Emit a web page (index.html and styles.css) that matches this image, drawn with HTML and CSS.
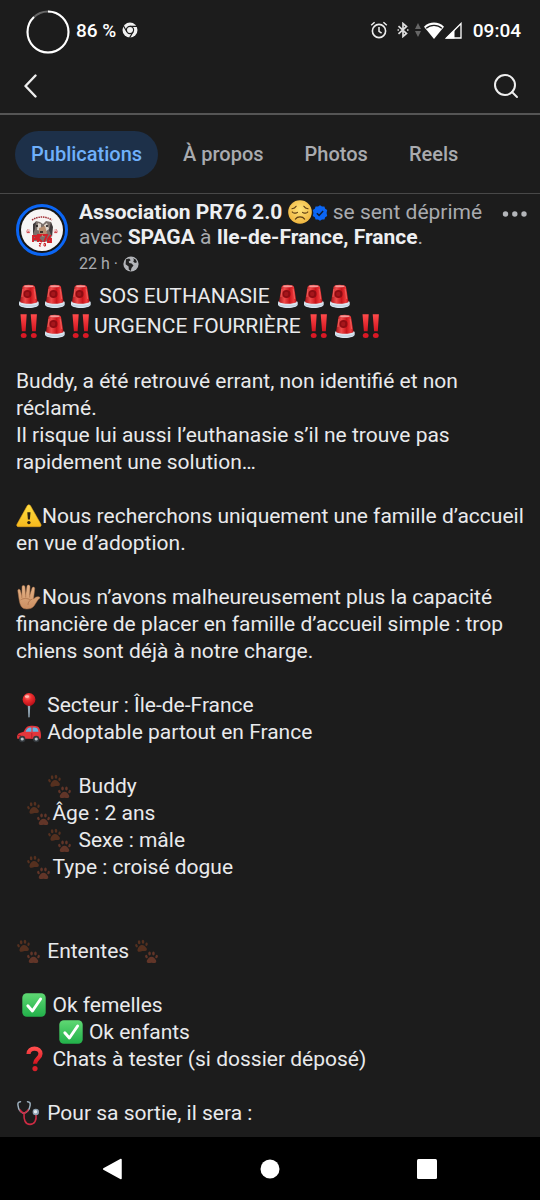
FILE: index.html
```html
<!DOCTYPE html>
<html lang="fr">
<head>
<meta charset="utf-8">
<meta name="viewport" content="width=device-width, initial-scale=1">
<title>Association PR76 2.0</title>
<link rel="stylesheet" href="styles.css">
</head>
<body>
<svg class="sprite" aria-hidden="true">
  <defs>
    <linearGradient id="g-red" x1="0" x2="1" y1="0" y2="0"><stop offset="0" stop-color="#a8151a"/><stop offset=".3" stop-color="#ee4a4a"/><stop offset=".6" stop-color="#c9151b"/><stop offset=".85" stop-color="#ef3a3c"/><stop offset="1" stop-color="#a30f15"/></linearGradient>
    <linearGradient id="g-mark" x1="0" x2="0" y1="0" y2="1"><stop offset="0" stop-color="#ff4b4b"/><stop offset="1" stop-color="#d3141f"/></linearGradient>
    <linearGradient id="g-warn" x1="0" x2="0" y1="0" y2="1"><stop offset="0" stop-color="#ffdf43"/><stop offset="1" stop-color="#f6b81c"/></linearGradient>
    <linearGradient id="g-hand" x1="0" x2="0" y1="0" y2="1"><stop offset="0" stop-color="#e6b489"/><stop offset="1" stop-color="#cb8f62"/></linearGradient>
    <linearGradient id="g-green" x1="0" x2="0" y1="0" y2="1"><stop offset="0" stop-color="#5fd873"/><stop offset="1" stop-color="#22b04a"/></linearGradient>
    <radialGradient id="g-pin" cx=".4" cy=".3" r=".7"><stop offset="0" stop-color="#ff8a80"/><stop offset=".4" stop-color="#ee2f2f"/><stop offset="1" stop-color="#b90f19"/></radialGradient>
    <radialGradient id="g-face" cx=".5" cy=".4" r=".6"><stop offset="0" stop-color="#ffe27a"/><stop offset="1" stop-color="#efb53f"/></radialGradient>
  </defs>
  <symbol id="siren" viewBox="0 0 26 26">
    <path d="M3 19.500c0-1 1.500-1.800 3-1.800h13.500c1.800 0 3.200.8 3.200 1.800v2c0 1.800-4 3.500-9.800 3.500S3 23.300 3 21.500z" fill="#d9e6f1"/>
    <path d="M4 21.500c2 2 15.500 2 18 0" fill="none" stroke="#a9bccd" stroke-width=".6"/>
    <path d="M6.500 4c.3-1.600 2.800-2.300 6.200-2.300S18.700 2.400 19 4l2.600 15c-3 2.400-14.700 2.400-17.600 0z" fill="url(#g-red)"/>
    <circle cx="11.500" cy="11" r="4" fill="#8d0c12"/><circle cx="11.200" cy="11" r="2.200" fill="#a5161b"/>
    <ellipse cx="12.800" cy="3.200" rx="4.800" ry="1" fill="#f59a98"/>
    <path d="M18.200 6l1.500 10M7 6l-1 8" stroke="#ef5c58" stroke-width="1"/>
  </symbol>
  <symbol id="double" viewBox="0 0 26 26">
    <path d="M4.500 1.200h6.200l-1.100 17H5.900zM14.700 1.200h6.200l-1.100 17h-3.700z" fill="url(#g-mark)"/>
    <ellipse cx="7.700" cy="22.500" rx="2.900" ry="2.500" fill="#db1925"/><ellipse cx="17.800" cy="22.500" rx="2.900" ry="2.500" fill="#db1925"/>
  </symbol>
  <symbol id="warning" viewBox="0 0 26 26">
    <path d="M11.200 2.800c.8-1.400 2.500-1.400 3.300 0l10.400 18.400c.7 1.300-.1 2.500-1.500 2.500H2.500C1 23.700.3 22.500 1 21.200z" fill="url(#g-warn)" stroke="#e7a51b" stroke-width=".6"/>
    <path d="M11.300 9.200h3.200l-.6 7.300h-2z" fill="#2b2112"/><ellipse cx="12.900" cy="19.600" rx="1.700" ry="1.600" fill="#2b2112"/>
  </symbol>
  <symbol id="hand" viewBox="0 0 26 26">
    <path d="M3 15L1.800 6.800c-.2-1.900 2-2.200 2.500-.5l1.500 5.500L6 3c0-1.900 2.800-2 3 0l.7 8L11 2.200c.3-1.800 3-1.600 3 .3l-.3 9L16 4.200c.6-1.800 3-1.200 2.700.7L17.500 15l1.700-1.500c1.600-1.300 4.300-1 4.800.1.300.8-1 1.300-2 2.200l-4 6.200C16.500 24 14 25 10.800 25 6 25 4 22 3 15z" fill="url(#g-hand)" stroke="#a96e47" stroke-width=".5"/>
    <path d="M5.800 11.800v2M9.700 11v2.500M13.700 11.500v2M4.500 16c3-2 7-2 10 0M16.500 15c-3 1-4.500 3-4.500 6" fill="none" stroke="#a96e47" stroke-width=".7"/>
  </symbol>
  <symbol id="pin" viewBox="0 0 26 26">
    <path d="M11.700 12h2.600l-.6 12.500L13 26l-.7-1.500z" fill="#93a7b5"/>
    <circle cx="13" cy="7.500" r="6.400" fill="url(#g-pin)"/><ellipse cx="11" cy="4.600" rx="2.200" ry="1.400" fill="#ffb7b0"/>
  </symbol>
  <symbol id="car" viewBox="0 0 26 26">
    <path d="M1.300 19.800c-.8-3 .2-5.200 3.200-6l3.200-1c1.500-3.300 3-5.600 5.600-5.800 3.200-.3 6.200-.2 8.200.4 1.700.6 2.700 3.400 3.200 6 .5 2.700.4 4.900-.2 6.400z" fill="#e2363c"/>
    <path d="M9.500 12.800c.9-2.100 2-4 3.900-4.200h2v4.200zM16.600 8.500c1.500 0 3 .1 4 .4 1 .4 1.700 2.200 2 3.900h-6z" fill="#62b6e4"/>
    <path d="M2 16.500h3M15.800 14v5" stroke="#a31c25" stroke-width=".8"/>
    <circle cx="6.200" cy="20" r="3.200" fill="#33383d"/><circle cx="20.200" cy="20" r="3.200" fill="#33383d"/><circle cx="6.200" cy="20" r="1.600" fill="#b7c2c9"/><circle cx="20.200" cy="20" r="1.600" fill="#b7c2c9"/>
  </symbol>
  <symbol id="paw" viewBox="0 0 12 12">
    <path d="M6 5.700c1.900 0 3 1.600 4 3 .9 1.400.2 3-1.400 2.900-1 0-1.600-.4-2.600-.4s-1.600.4-2.600.4C1.800 11.700 1.100 10.100 2 8.700c1-1.400 2.100-3 4-3z"/>
    <ellipse cx="1.300" cy="5.600" rx="1.100" ry="1.600" transform="rotate(-20 1.300 5.600)"/><ellipse cx="4.200" cy="2.800" rx="1.200" ry="1.900"/><ellipse cx="7.800" cy="2.800" rx="1.200" ry="1.900"/><ellipse cx="10.700" cy="5.600" rx="1.100" ry="1.600" transform="rotate(20 10.700 5.600)"/>
  </symbol>
  <symbol id="paws" viewBox="0 0 26 26">
    <g fill="#55301f"><use href="#paw" x="1" y="1" width="13" height="13" transform="rotate(-8 7 7)"/></g>
    <g fill="#613528"><use href="#paw" x="11" y="12.500" width="13" height="13"/></g>
  </symbol>
  <symbol id="check" viewBox="0 0 26 26">
    <rect x="1.300" y="1.300" width="23.400" height="23.400" rx="4.500" fill="url(#g-green)"/>
    <path d="M6.800 13.800l4.600 5.200 8.200-12" fill="none" stroke="#fff" stroke-width="2.900" stroke-linecap="round" stroke-linejoin="round"/>
  </symbol>
  <symbol id="question" viewBox="0 0 26 26">
    <path d="M7.500 8c0-3.500 2.500-5.300 6-5.300s6 1.900 6 5c0 4.800-5.500 4.800-5.500 10" fill="none" stroke="url(#g-mark)" stroke-width="4.200"/>
    <circle cx="14" cy="22.600" r="2.600" fill="#d8202a"/>
  </symbol>
  <symbol id="stethoscope" viewBox="0 0 26 26">
    <path d="M4.500 1.700C2 2 1.600 3 2 5.500c.5 4 2.500 7 5.500 7.700 3.600-.6 6-3.600 6.600-7.700.4-2.500-.2-3.500-2.600-3.800" fill="none" stroke="#9db0bf" stroke-width="1.500" stroke-linecap="round"/>
    <path d="M4 9.500c.8 2.200 2.200 3.400 4 3.700 1.800-.3 3.300-1.600 4.300-3.700M8 13.200c-.3 6.200 1 11.200 6 11.200 4.500 0 6.800-4 6-10" fill="none" stroke="#cc2b43" stroke-width="1.600"/>
    <circle cx="19.800" cy="12" r="3.200" fill="#8fa3b3"/><circle cx="19.500" cy="11.800" r="1.700" fill="#e3ebf0"/>
  </symbol>
  <symbol id="sad" viewBox="0 0 26 26">
    <circle cx="13" cy="13" r="12.800" fill="url(#g-face)"/>
    <path d="M4.300 9.500c2-.2 3.500-1 4.500-2.700M21.700 9.500c-2-.2-3.500-1-4.500-2.700M4.600 13c1.200 1.600 4.200 1.700 5.600.4M21.400 13c-1.200 1.600-4.200 1.700-5.600.4M8 20.600c2.300-3 7.700-3 10 0" fill="none" stroke="#5c3b12" stroke-width="1.300" stroke-linecap="round"/>
  </symbol>
</svg>

<header>
  <div class="status">
    <svg class="ring" viewBox="0 0 44 44" aria-hidden="true"><circle cx="22" cy="22" r="20.500" fill="none" stroke="#666" stroke-width="2"/><circle cx="22" cy="22" r="20.500" pathLength="100" stroke-dasharray="88 12" transform="rotate(-90 22 22)" fill="none" stroke="#fff" stroke-width="2"/></svg>
    <span class="battery">86 %</span>
    <svg class="chrome" viewBox="0 0 16 16" aria-hidden="true"><circle cx="8" cy="8" r="7.500" fill="#f1f1f1"/><circle cx="8" cy="8" r="3.600" fill="none" stroke="#1c1c1c" stroke-width="1.200"/><path d="M8 4.400h7M4.900 9.800L1.400 3.800M11.100 9.800L7.600 15.800" stroke="#1c1c1c" stroke-width="1.200"/></svg>
    <span class="grow"></span>
    <svg class="alarm" viewBox="0 0 18 18" fill="none" stroke="#eee" aria-hidden="true"><circle cx="9" cy="10" r="6.600" stroke-width="1.600"/><path d="M9 6v4.300l2.600 1.800M1.200 4.200L4.600 1.300M16.800 4.200l-3.400-2.900" stroke-width="1.500"/></svg>
    <svg class="bluetooth" viewBox="0 0 12 16" fill="none" stroke="#ddd" stroke-width="1.700" aria-hidden="true"><path d="M1.500 4.200l8 7.300L6 14.500v-13l3.500 3-8 7.300"/><path d="M.5 8h1.500M10 8h1.500"/></svg>
    <svg class="updown" viewBox="0 0 6 14" fill="#666" aria-hidden="true"><path d="M3 0l3 6H0zM3 14l3-6H0z"/></svg>
    <svg class="wifi" viewBox="0 0 20 17" aria-hidden="true"><path d="M0 4.800C5.500-.8 14.500-.8 20 4.800L10 17z" fill="#fff"/><path d="M2.200 6.300C6.500 2.300 13.500 2.300 17.800 6.300" fill="none" stroke="#1c1c1c" stroke-width="1.300"/></svg>
    <svg class="signal" viewBox="0 0 17 17" aria-hidden="true"><path d="M16 1.500V16H1.500z" fill="none" stroke="#fff" stroke-width="1.300"/><path d="M9.500 8v8.500H.5z" fill="#fff"/></svg>
    <time class="clock">09:04</time>
  </div>
  <div class="toolbar">
    <button aria-label="Retour"><svg width="14" height="26" viewBox="0 0 14 26"><path d="M12.500 2.500L2.500 13l10 10.500" fill="none" stroke="#eee" stroke-width="2.400" stroke-linecap="round" stroke-linejoin="round"/></svg></button>
    <button aria-label="Rechercher"><svg width="26" height="26" viewBox="0 0 26 26" fill="none" stroke="#eee" stroke-width="2"><circle cx="12" cy="12" r="10"/><path d="M19 19l5 5" stroke-linecap="round"/></svg></button>
  </div>
  <nav class="tabs">
    <a class="tab active" href="#publications" aria-current="page">Publications</a>
    <a class="tab" href="#apropos">À propos</a>
    <a class="tab" href="#photos">Photos</a>
    <a class="tab" href="#reels">Reels</a>
  </nav>
</header>

<main id="publications">
  <article>
    <div class="author">
      <svg class="avatar" viewBox="0 0 52 52" role="img" aria-label="Association PR76 2.0">
        <circle cx="26" cy="26" r="24.500" fill="#151515" stroke="#0b66f5" stroke-width="3"/><circle cx="26" cy="26" r="21" fill="#f7f5f4"/>
        <path d="M16 16q10-6 20 0" fill="none" stroke="#a02c32" stroke-width="1.500" stroke-dasharray="1.500 .8"/>
        <path d="M17 21l3-4 4 1 3 2 3-3 5 1 1 6-1 13-8 1-10-1z" fill="#7b706b"/>
        <path d="M17 20l3-2-1 7-2 5zM35 18l2 5-1 10-3-7z" fill="#3f3a3b"/>
        <path d="M22 19l3 1v7l-4-1zM28 21l3-2 2 6-4 3z" fill="#dfd5cc"/><path d="M23 24l6-2 2 7-4 4-4-4z" fill="#b78e70"/>
        <path d="M20 22h2M30 22h2M24 28h3" stroke="#171414" stroke-width="1.500"/>
        <path d="M17 31v7M17 32h3v3h-3M22 38v-7h3l-3 3 4 4M27 31h4l-3 7M35 31l-3 4v3h3v-3h-3" fill="none" stroke="#d42029" stroke-width="1.900"/>
        <path d="M23 39.500h2l-2 2.500h2M28 39.500h1.500v2.500H28z" fill="none" stroke="#c9262d"/>
        <g fill="#d34a50"><use href="#paw" x="10" y="25" width="4.500" height="4.500"/><use href="#paw" x="37.500" y="25" width="4.500" height="4.500"/></g>
      </svg>
      <div class="author-text">
        <h1><strong>Association PR76 2.0</strong> <svg class="emoji feeling" role="img" aria-label="triste"><use href="#sad"/></svg><svg class="verified" viewBox="0 0 16 16" role="img" aria-label="Compte vérifié"><path d="M8 .3l2 1.300 2.400-.1.800 2.200 2 1.400L14.600 8l.6 2.900-2 1.400-.8 2.200-2.400-.1-2 1.300-2-1.300-2.400.1-.8-2.200-2-1.400L1.400 8 .8 5.100l2-1.400.8-2.200 2.400.1z" fill="#0b66f5"/><path d="M4.800 8.200l2.300 2.200 4-4.300" fill="none" stroke="#101c30" stroke-width="1.500"/></svg> se sent déprimé avec <strong>SPAGA</strong> à <strong>Ile-de-France, France</strong>.</h1>
        <p class="meta">22 h · <svg width="16" height="16" viewBox="0 0 16 16" role="img" aria-label="Public"><circle cx="8" cy="8" r="7.600" fill="#b3b5b9"/><path d="M3 3.200l3.200-.7 1.500 1.700-2 1.200.5 1.600 2.400.6 1.900 2-2 2.400-.7 3-2-1.500-.2-2.900-3-2.400zM10 2.200l2.700 1.300 1.300 2.800-2 .7-1.800-1.600.8-1.500z" fill="#222"/></svg></p>
      </div>
      <button class="more" aria-label="Plus d’options"><svg width="26" height="6" viewBox="0 0 26 6" fill="#b3b5b9"><circle cx="3.500" cy="3" r="2.700"/><circle cx="12.800" cy="3" r="2.700"/><circle cx="22" cy="3" r="2.700"/></svg></button>
    </div>
    <div class="body">
      <p class="lead"><svg class="emoji"><use href="#siren"/></svg><svg class="emoji"><use href="#siren"/></svg><svg class="emoji"><use href="#siren"/></svg> SOS EUTHANASIE <svg class="emoji"><use href="#siren"/></svg><svg class="emoji"><use href="#siren"/></svg><svg class="emoji"><use href="#siren"/></svg><br><svg class="emoji"><use href="#double"/></svg><svg class="emoji"><use href="#siren"/></svg><svg class="emoji"><use href="#double"/></svg>URGENCE FOURRIÈRE <svg class="emoji"><use href="#double"/></svg><svg class="emoji"><use href="#siren"/></svg><svg class="emoji"><use href="#double"/></svg></p>
      <p>Buddy, a été retrouvé errant, non identifié et non réclamé.<br>Il risque lui aussi l’euthanasie s’il ne trouve pas rapidement une solution…</p>
      <p><svg class="emoji"><use href="#warning"/></svg>Nous recherchons uniquement une famille d’accueil en vue d’adoption.</p>
      <p><svg class="emoji"><use href="#hand"/></svg>Nous n’avons malheureusement plus la capacité financière de placer en famille d’accueil simple : trop chiens sont déjà à notre charge.</p>
      <p><svg class="emoji"><use href="#pin"/></svg> Secteur : Île-de-France<br><svg class="emoji"><use href="#car"/></svg> Adoptable partout en France</p>
      <p class="facts">      <svg class="emoji"><use href="#paws"/></svg> Buddy<br>  <svg class="emoji"><use href="#paws"/></svg>Âge : 2 ans<br>      <svg class="emoji"><use href="#paws"/></svg> Sexe : mâle<br>  <svg class="emoji"><use href="#paws"/></svg>Type : croisé dogue</p>
      <p><svg class="emoji"><use href="#paws"/></svg> Ententes <svg class="emoji"><use href="#paws"/></svg></p>
      <p> <svg class="emoji"><use href="#check"/></svg> Ok femelles<br>        <svg class="emoji"><use href="#check"/></svg> Ok enfants<br> <svg class="emoji"><use href="#question"/></svg> Chats à tester (si dossier déposé)</p>
      <p><svg class="emoji"><use href="#stethoscope"/></svg> Pour sa sortie, il sera :</p>
    </div>
  </article>
</main>

<footer class="system">
  <button aria-label="Précédent"><svg width="22" height="22" viewBox="0 0 22 22"><path d="M19 1.500v19L1.700 11z" fill="#fff" stroke="#fff" stroke-width="1.500" stroke-linejoin="round"/></svg></button>
  <button aria-label="Accueil"><svg width="22" height="22" viewBox="0 0 22 22"><circle cx="11" cy="11" r="9.500" fill="#fff"/></svg></button>
  <button aria-label="Applications récentes"><svg width="22" height="22" viewBox="0 0 22 22"><rect x="1" y="1" width="20" height="20" rx="1.500" fill="#fff"/></svg></button>
</footer>
</body>
</html>
```

FILE: styles.css
```css
* { box-sizing: border-box; }

body {
  margin: 0;
  min-height: 100vh;
  display: flex;
  flex-direction: column;
  background: #1c1c1c;
  color: #e9eaec;
  font-family: Roboto, "Liberation Sans", sans-serif;
}

svg { display: block; flex: none; }
p, h1 { margin: 0; font-weight: 400; }
button { display: flex; padding: 0; border: 0; background: none; cursor: pointer; }

.sprite { position: absolute; width: 0; height: 0; }

.status {
  display: flex;
  align-items: center;
  height: 60px;
  padding: 3px 19px 3px 26px;
  color: #fff;
  font-size: 19px;
  font-weight: 500;
}
.ring { width: 44px; height: 44px; margin-top: 4px; }
.battery { margin: 0 6px; }
.chrome { width: 16px; height: 16px; }
.grow { flex: 1; }
.alarm { width: 18px; height: 18px; margin-right: 9px; }
.bluetooth { width: 12px; height: 16px; margin-right: 6px; }
.updown { width: 6px; height: 14px; margin-right: 3px; }
.wifi { width: 20px; height: 17px; margin-right: 1px; }
.signal { width: 17px; height: 17px; margin-right: 11px; }

.toolbar {
  display: flex;
  justify-content: space-between;
  align-items: center;
  height: 55px;
  padding: 0 21px 2px 23px;
  border-bottom: 2px solid #555;
}

.tabs {
  display: flex;
  align-items: center;
  gap: 9px;
  padding: 16px 15px 15px;
  border-bottom: 1px solid #484848;
}
.tab {
  padding: 0 16px;
  border-radius: 24px;
  color: #a9abaf;
  font-size: 20px;
  font-weight: 500;
  line-height: 47px;
  text-decoration: none;
}
.active { background: #1d3049; color: #6fb0fb; }

.author { display: flex; align-items: flex-start; padding: 6px 12px 0 16px; }
.avatar { width: 52px; height: 52px; margin: 4px 11px 0 0; }
.author-text { flex: 1; }
.author h1 { color: #a9abaf; font-size: 21px; line-height: 25px; }
.author strong { color: #eeeff1; font-weight: 700; }
.verified { display: inline-block; width: 16px; height: 16px; vertical-align: -2px; }
.meta { display: flex; align-items: center; gap: 5px; color: #a9abaf; font-size: 16px; line-height: 28px; }
.more { margin: 11px 0 0 16px; }

.emoji {
  display: inline-block;
  width: 26px;
  height: 26px;
  margin: -4px 0;
  vertical-align: -2px;
}
.feeling { width: 24px; }

.body {
  display: flex;
  flex-direction: column;
  gap: 27px;
  padding: 3px 12px 10px 16px;
  font-size: 21px;
  line-height: 27px;
}
.body p { white-space: pre-wrap; }
.body .lead { line-height: 30px; }
.body .facts { margin-bottom: 30px; }

.system {
  display: flex;
  justify-content: center;
  align-items: center;
  gap: 25%;
  height: 63px;
  margin-top: auto;
  background: #000;
}
```
